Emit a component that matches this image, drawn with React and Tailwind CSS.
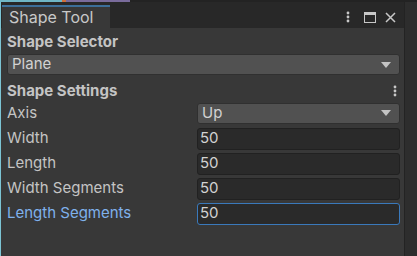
import React from "react";

const Kebab = ({ className = "" }) => (
  <svg width="4" height="12" viewBox="0 0 4 12" className={className}>
    <circle cx="2" cy="2" r="1.4" fill="#c8c8c8" />
    <circle cx="2" cy="6" r="1.4" fill="#c8c8c8" />
    <circle cx="2" cy="10" r="1.4" fill="#c8c8c8" />
  </svg>
);

const Caret = () => (
  <svg width="10" height="6" viewBox="0 0 10 6">
    <path d="M0 0 L10 0 L5 6 Z" fill="#c4c4c4" />
  </svg>
);

const Dropdown = ({ value, className = "" }) => (
  <div
    className={`h-[21px] flex items-center justify-between rounded-[3px] bg-[#515151] border border-[#303030] pl-[4px] pr-[8px] text-[#d2d2d2] ${className}`}
  >
    <span>{value}</span>
    <Caret />
  </div>
);

const Row = ({ label, children, active }) => (
  <div className="h-[25px] flex items-center">
    <span className={`w-[190px] ${active ? "text-[#7fb1ec]" : "text-[#c4c4c4]"}`}>{label}</span>
    <div className="flex-1">{children}</div>
  </div>
);

const Field = ({ value, active }) => (
  <div
    className={`h-[22px] flex items-center rounded-[3px] bg-[#2a2a2a] px-[2px] text-[#d2d2d2] border ${
      active ? "border-[#3a79bb]" : "border-[#212121]"
    }`}
  >
    {value}
  </div>
);

export default function App() {
  return (
    <div
      className="w-[417px] h-[256px] overflow-hidden flex flex-col bg-[#282828] text-[15px]"
      style={{ fontFamily: "Inter, 'Noto Sans', sans-serif" }}
    >
      <div className="h-[2px] flex">
        <div className="w-[62px] bg-[#6fb6c6]" />
        <div className="w-[4px] bg-[#d0703a]" />
        <div className="w-[64px] bg-[#7a6c9c]" />
        <div className="flex-1 bg-[#232323]" />
      </div>
      <div className="flex-1 flex border-l border-[#7cc4d4]">
        <div className="w-[403px] flex flex-col">
          <div className="h-[26px] flex items-stretch bg-[#282828]">
            <div className="ml-[1px] w-[108px] bg-[#383838] mt-[3px] flex flex-col">
              <div className="h-[2px] bg-[#3c6f9a]" />
              <span className="pl-[7px] pt-[1px] text-[16px] leading-[19px] text-[#c8c8c8]">Shape Tool</span>
            </div>
            <div className="flex-1 flex items-center justify-end pr-[8px] pt-[4px]">
              <Kebab />
              <div className="ml-[14px] w-[12px] h-[11px] border border-[#c8c8c8] border-t-[3px]" />
              <svg width="11" height="11" viewBox="0 0 11 11" className="ml-[9px]">
                <path d="M1 1 L10 10 M10 1 L1 10" stroke="#c8c8c8" strokeWidth="1.5" />
              </svg>
            </div>
          </div>
          <div className="flex-1 bg-[#383838] pl-[6px] pr-[4px] pt-[4px]">
            <div className="font-bold text-[#c4c4c4] h-[20px] leading-[20px]">Shape Selector</div>
            <Dropdown value="Plane" className="mt-[2px]" />
            <div className="mt-[6px] h-[20px] flex items-center justify-between">
              <span className="font-bold text-[#c4c4c4]">Shape Settings</span>
              <Kebab className="mr-[3px]" />
            </div>
            <div>
              <Row label="Axis">
                <Dropdown value="Up" className="mt-[-1px]" />
              </Row>
              <Row label="Width">
                <Field value="50" />
              </Row>
              <Row label="Length">
                <Field value="50" />
              </Row>
              <Row label="Width Segments">
                <Field value="50" />
              </Row>
              <Row label="Length Segments" active>
                <Field value="50" active />
              </Row>
            </div>
          </div>
        </div>
        <div className="flex-1 bg-[#2d2d2d] border-l border-[#232323]" />
      </div>
    </div>
  );
}
